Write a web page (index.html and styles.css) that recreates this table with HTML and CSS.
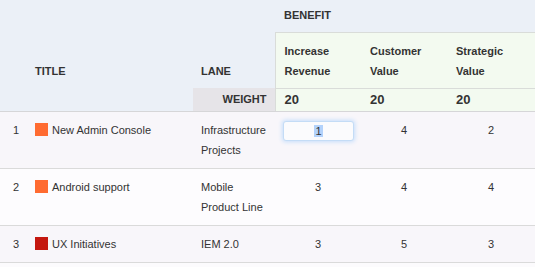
FILE: index.html
```html
<!DOCTYPE html>
<html>
<head>
<meta charset="utf-8">
<link rel="stylesheet" href="styles.css">
</head>
<body>
<table class="grid">
  <colgroup>
    <col class="c-num"><col class="c-title"><col class="c-lane"><col class="c-ben"><col class="c-ben"><col class="c-ben3">
  </colgroup>
  <thead>
    <tr class="h-top">
      <th class="hd num" rowspan="2"></th>
      <th class="hd title" rowspan="2">TITLE</th>
      <th class="hd lane" rowspan="2">LANE</th>
      <th class="hd group" colspan="3">BENEFIT</th>
    </tr>
    <tr class="h-sub">
      <th class="hd ben">Increase<br>Revenue</th>
      <th class="hd ben">Customer<br>Value</th>
      <th class="hd ben">Strategic<br>Value</th>
    </tr>
    <tr class="h-weight">
      <th class="hd blank" colspan="2"></th>
      <th class="hd weight">WEIGHT</th>
      <th class="hd wval">20</th>
      <th class="hd wval">20</th>
      <th class="hd wval">20</th>
    </tr>
  </thead>
  <tbody>
    <tr class="row odd">
      <td class="num">1</td>
      <td class="title"><span class="sq orange"></span>New Admin Console</td>
      <td class="lane">Infrastructure<br>Projects</td>
      <td class="val"><div class="edit"><span class="sel">1</span></div></td>
      <td class="val">4</td>
      <td class="val">2</td>
    </tr>
    <tr class="row even">
      <td class="num">2</td>
      <td class="title"><span class="sq orange"></span>Android support</td>
      <td class="lane">Mobile<br>Product Line</td>
      <td class="val">3</td>
      <td class="val">4</td>
      <td class="val">4</td>
    </tr>
    <tr class="row odd">
      <td class="num">3</td>
      <td class="title"><span class="sq red"></span>UX Initiatives</td>
      <td class="lane">IEM 2.0</td>
      <td class="val">3</td>
      <td class="val">5</td>
      <td class="val">3</td>
    </tr>
  </tbody>
</table>
</body>
</html>
```
FILE: styles.css
```css
html, body {
  margin: 0;
  padding: 0;
  background: #fcfbfd;
}
body {
  font-family: "Liberation Sans", Arial, Helvetica, sans-serif;
  font-size: 11px;
  color: #333;
  width: 535px;
  overflow: hidden;
}
.grid {
  border-collapse: collapse;
  table-layout: fixed;
  width: 535px;
}
.c-num { width: 27px; }
.c-title { width: 166px; }
.c-lane { width: 82px; }
.c-ben { width: 86px; }
.c-ben3 { width: 88px; }

.hd {
  background: #ebf0f7;
  font-weight: bold;
  text-align: left;
  padding: 0;
  color: #333;
  line-height: 20px;
}
.h-top { height: 32px; }
.h-top .group {
  vertical-align: top;
  padding: 5px 0 0 9px;
  height: 32px;
  box-sizing: border-box;
}
.h-top .title, .h-top .lane {
  vertical-align: bottom;
  padding: 0 0 7px 8px;
}
.h-sub .ben {
  background: #f3faf0;
  border-top: 1px solid #d9dcd9;
  padding: 8px 0 6px 9px;
  height: 56px;
  box-sizing: border-box;
  vertical-align: top;
}
.h-sub .ben:first-child {
  border-left: 1px solid #d9dcd9;
}
.h-weight th {
  height: 22px;
  vertical-align: middle;
  border-bottom: 1px solid #d6d6d8;
  line-height: 20px;
  padding-top: 0;
  padding-bottom: 0;
}
.h-weight .weight {
  background: #e6e4e8;
  text-align: right;
  padding-right: 8px;
}
.h-weight .wval {
  background: #f3faf0;
  border-top: 1px solid #d9dcd9;
  font-size: 13px;
  padding-left: 9px;
}
.h-weight .wval:nth-child(3) {
  border-left: 1px solid #d9dcd9;
}

.row td {
  padding: 8px 0;
  line-height: 20px;
  vertical-align: top;
  border-bottom: 1px solid #dadada;
  color: #333;
}
.row.odd td { background: #f8f6fa; }
.row.even td { background: #fdfcfe; }
.row .num { padding-left: 13px; }
.row .title { padding-left: 8px; }
.row .lane { padding-left: 8px; }
.row .val { text-align: center; }

.sq {
  display: inline-block;
  width: 13px;
  height: 13px;
  margin-right: 4px;
  vertical-align: -2px;
}
.sq.orange { background: #ff6b31; }
.sq.red { background: #c4170f; }

.edit {
  width: 69px;
  height: 18px;
  margin: 1px 0 0 8px;
  border: 1px solid #c4dcf6;
  border-radius: 3px;
  background: #fbfbfd;
  box-shadow: 0 0 4px 1px #c6defb;
  line-height: 18px;
  text-align: center;
}
.sel {
  background: #b3d2fb;
  padding: 0 1px;
}
```
